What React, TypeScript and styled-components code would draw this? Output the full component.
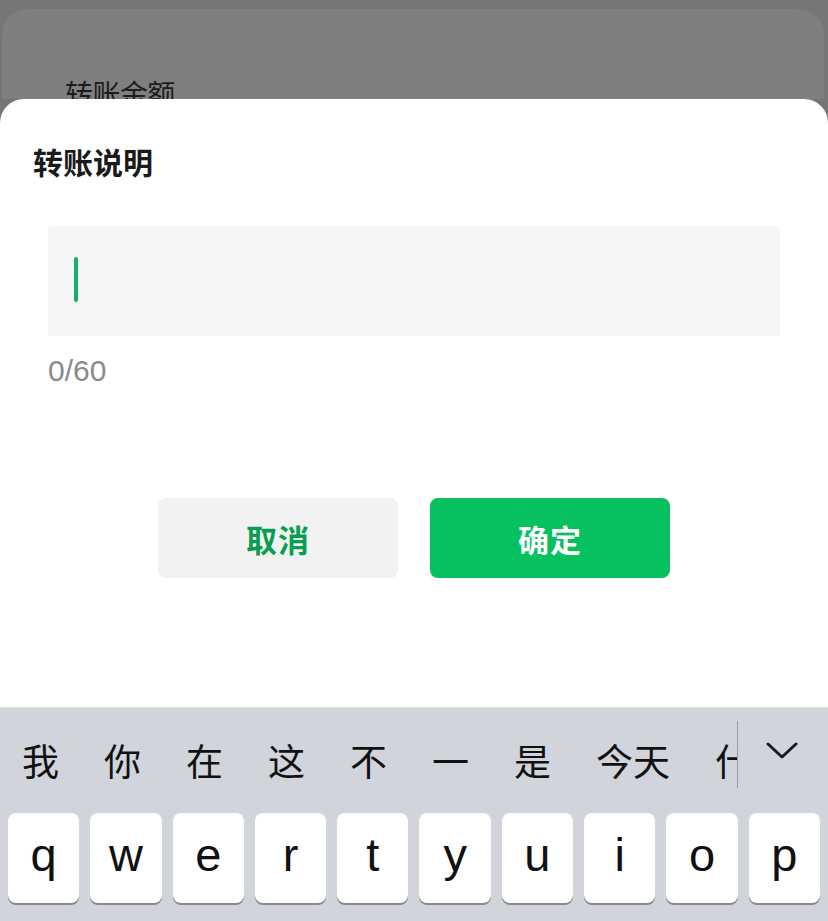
import React from "react";
import styled, { createGlobalStyle } from "styled-components";

const GlobalStyle = createGlobalStyle`
  html, body {
    margin: 0;
    padding: 0;
    background: #767676;
  }
  body {
    font-family: "Noto Sans CJK SC", "Noto Sans", sans-serif;
  }
`;

const candidates = ["我", "你", "在", "这", "不", "一", "是", "今天", "什么"];
const letters = ["q", "w", "e", "r", "t", "y", "u", "i", "o", "p"];

export default function App() {
  return (
    <>
      <GlobalStyle />
      <Screen>
        <Backdrop>
          <BehindCard>
            <BehindLabel>转账金额</BehindLabel>
          </BehindCard>
        </Backdrop>
        <Sheet>
          <Title>转账说明</Title>
          <InputBox>
            <Cursor />
          </InputBox>
          <Counter>0/60</Counter>
          <ButtonRow>
            <ActionButton>取消</ActionButton>
            <ActionButton primary>确定</ActionButton>
          </ButtonRow>
        </Sheet>
        <Keyboard>
          <CandidateBar>
            <CandidateList>
              {candidates.map((c) => (
                <Candidate key={c}>{c}</Candidate>
              ))}
            </CandidateList>
            <Divider />
            <CollapseBox>
              <svg width="32" height="18" viewBox="0 0 32 18">
                <path
                  d="M2 2 L16 15 L30 2"
                  fill="none"
                  stroke="#1a1a1a"
                  strokeWidth="3"
                  strokeLinecap="round"
                  strokeLinejoin="round"
                />
              </svg>
            </CollapseBox>
          </CandidateBar>
          <KeyRow>
            {letters.map((l) => (
              <Key key={l}>{l}</Key>
            ))}
          </KeyRow>
        </Keyboard>
      </Screen>
    </>
  );
}

const Screen = styled.div`
  width: 828px;
  height: 921px;
  display: flex;
  flex-direction: column;
  overflow: hidden;
  background: #767676;
`;

const Backdrop = styled.div`
  padding-top: 9px;
  background: #767676;
`;

const BehindCard = styled.div`
  height: 90px;
  margin: 0 4px 0 2px;
  padding: 67px 0 0 63px;
  box-sizing: border-box;
  background: #7f7f7f;
  border-radius: 26px 26px 0 0;
  overflow: hidden;
`;

const BehindLabel = styled.div`
  font-size: 28px;
  line-height: 34px;
  color: #1c1c1c;
  letter-spacing: -0.5px;
`;

const Sheet = styled.div`
  flex: 1;
  display: flex;
  flex-direction: column;
  background: #ffffff;
  border-radius: 24px 24px 0 0;
`;

const Title = styled.div`
  margin: 44px 0 0 33px;
  font-size: 30px;
  line-height: 36px;
  font-weight: 600;
  color: #1a1a1a;
`;

const InputBox = styled.div`
  margin: 47px 48px 0 48px;
  height: 110px;
  padding: 31px 0 0 26px;
  box-sizing: border-box;
  background: #f6f6f6;
  border-radius: 4px;
`;

const Cursor = styled.div`
  width: 4px;
  height: 45px;
  border-radius: 2px;
  background: #12b06a;
`;

const Counter = styled.div`
  margin: 17px 0 0 48px;
  font-family: "Liberation Sans", Arial, sans-serif;
  font-size: 30px;
  line-height: 36px;
  color: #8a8a8a;
`;

const ButtonRow = styled.div`
  display: flex;
  justify-content: center;
  gap: 32px;
  margin-top: 109px;
`;

const ActionButton = styled.div<{ primary?: boolean }>`
  width: 240px;
  height: 80px;
  display: flex;
  align-items: center;
  justify-content: center;
  border-radius: 8px;
  font-size: 31px;
  font-weight: 700;
  letter-spacing: 1px;
  background: ${(p) => (p.primary ? "#07c160" : "#f2f2f2")};
  color: ${(p) => (p.primary ? "#ffffff" : "#089e52")};
`;

const Keyboard = styled.div`
  height: 214px;
  flex-shrink: 0;
  background: #d1d4da;
  border-top: 1px solid #e2e3e6;
  box-sizing: border-box;
  display: flex;
  flex-direction: column;
`;

const CandidateBar = styled.div`
  height: 103px;
  display: flex;
  align-items: center;
`;

const CandidateList = styled.div`
  width: 737px;
  flex-shrink: 0;
  display: flex;
  gap: 45px;
  padding-left: 22px;
  box-sizing: border-box;
  overflow: hidden;
  white-space: nowrap;
`;

const Candidate = styled.span`
  font-size: 37px;
  line-height: 56px;
  color: #111111;
  flex-shrink: 0;
`;

const Divider = styled.div`
  width: 1px;
  height: 67px;
  margin-top: -10px;
  background: #9a9ca2;
`;

const CollapseBox = styled.div`
  flex: 1;
  display: flex;
  justify-content: center;
  padding: 0 2px 18px 0;
`;

const KeyRow = styled.div`
  display: flex;
  gap: 11px;
  padding: 2px 8px 0 8px;
`;

const Key = styled.div`
  flex: 1;
  height: 90px;
  display: flex;
  align-items: center;
  justify-content: center;
  padding-bottom: 8px;
  box-sizing: border-box;
  background: #ffffff;
  border-radius: 8px;
  box-shadow: 0 2px 0 #898a8e;
  font-family: "Liberation Sans", Arial, sans-serif;
  font-size: 47px;
  color: #111111;
`;
